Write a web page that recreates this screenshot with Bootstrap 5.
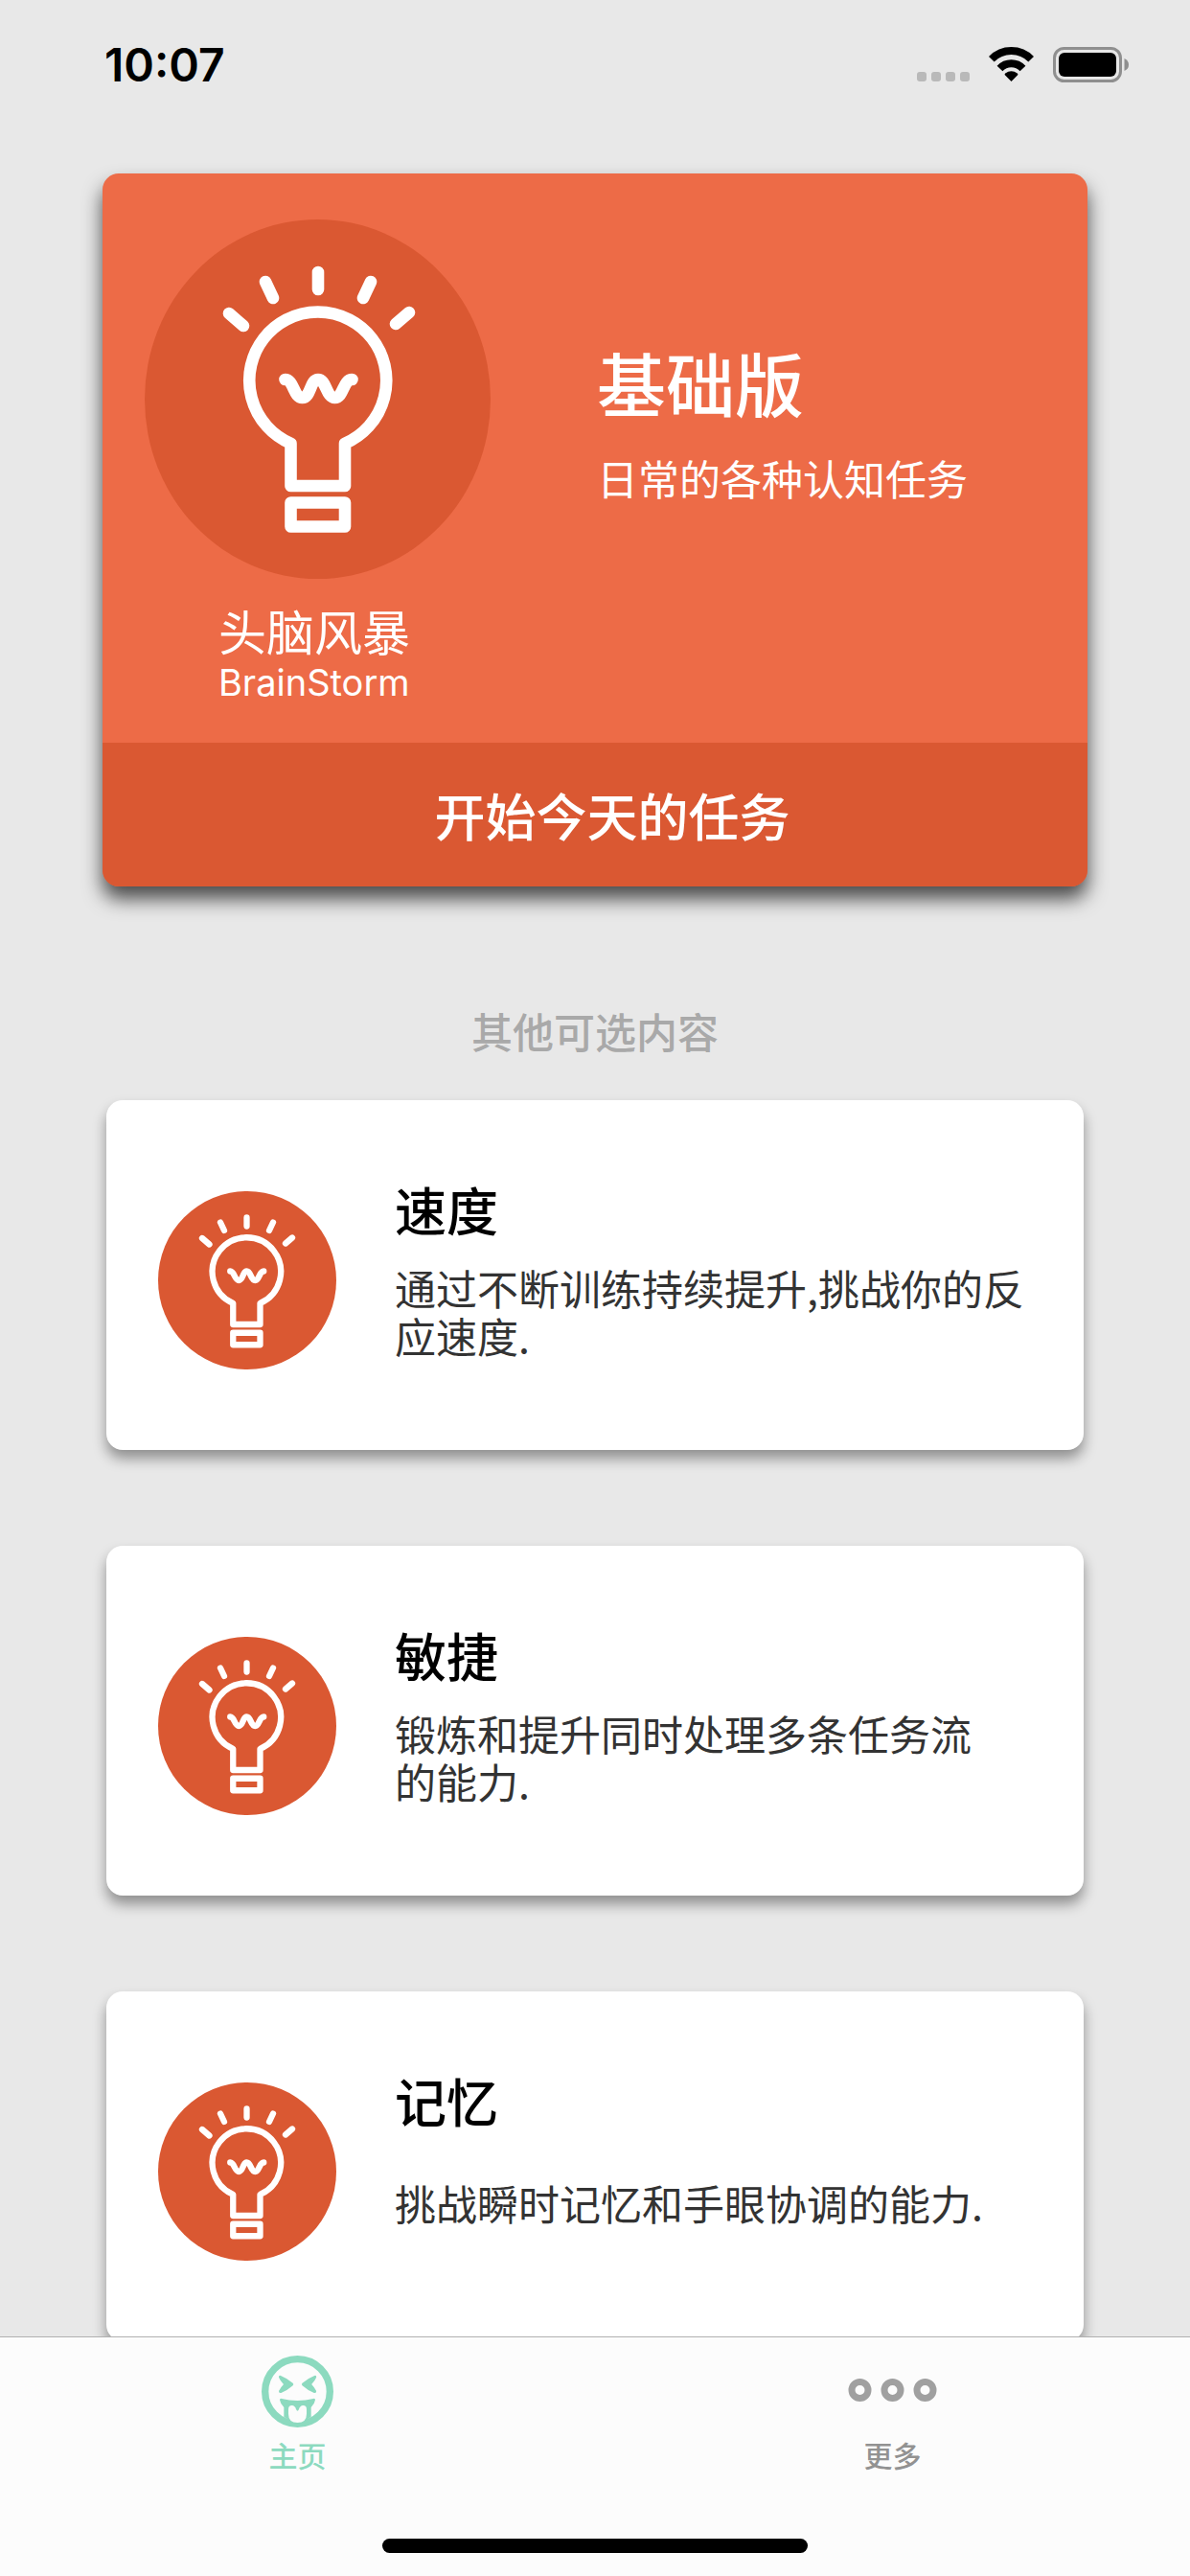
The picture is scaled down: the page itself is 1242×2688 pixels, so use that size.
<!DOCTYPE html>
<html lang="zh-CN">
<head>
<meta charset="utf-8">
<meta name="viewport" content="width=device-width, initial-scale=1">
<title>头脑风暴 BrainStorm</title>
<link href="https://cdn.jsdelivr.net/npm/bootstrap@5.3.0/dist/css/bootstrap.min.css" rel="stylesheet">
<style>
  :root { --page: #e8e8e8; --orange: #ed6b47; --orange-dark: #da5832; --mint: #8cdabf; --bar: #fcfcfc; }
  body { background: var(--page); color: #000; font-family: Inter, "Noto Sans CJK SC", sans-serif; }
  .status-bar { height: 181px; padding: 40px 64px 0 109px; }
  .clock { font-size: 48px; line-height: 56px; font-weight: 600; }
  .status-icons { padding-top: 9px; gap: 20px; }
  .screen { padding: 0 107px 245px; }
  .cjk { font-family: "Noto Sans CJK SC", sans-serif; }

  .hero { border: 0; border-radius: 17px; background: var(--orange); color: #fff; box-shadow: 0 13px 20px rgba(0, 0, 0, .68); }
  .hero-left { padding: 48px 0 38px 44px; }
  .hero-caption { padding: 23px 0 0 77px; }
  .hero-name { font-size: 50px; line-height: 60px; }
  .hero-latin { font-size: 38px; line-height: 50px; }
  .hero-right { padding: 174px 0 0 2px; }
  .hero-title { font-size: 72px; line-height: 86px; font-weight: 500; }
  .hero-text { font-size: 43px; line-height: 50px; margin-top: 32px; }
  .start-btn { border-radius: 0 0 17px 17px; background: var(--orange-dark); color: #fff; border: 0; height: 150px; padding: 0 0 0 36px; font-size: 53px; line-height: 64px; font-weight: 500; }
  .start-btn:hover, .start-btn:active { background: #c94f2c; color: #fff; }

  .section-label { margin: 125px 0 48px; font-size: 43px; line-height: 50px; font-weight: 500; color: #a9a9a9; }
  .task-list { gap: 100px; padding: 0 4px; }
  .task { border: 0; border-radius: 17px; min-height: 365px; color: #000; background: #fff; box-shadow: 0 9px 14px rgba(0, 0, 0, .38); }
  .task-icon { margin: 95px 61px 0 54px; }
  .task-body { padding: 82px 50px 0 0; }
  .task-title { font-size: 54px; line-height: 64px; font-weight: 500; }
  .task-text { font-size: 43px; line-height: 50px; height: 100px; margin-top: 24px; color: #333; }

  .tab-bar { background: var(--bar); border-top: 1px solid #b0b0b0; height: 250px; }
  .tab-link { padding-top: 19px; color: #929292; text-decoration: none; font-size: 30px; line-height: 36px; font-weight: 500; gap: 10px; }
  .tab-link.active { color: var(--mint); }
  .home-pill { width: 444px; height: 15px; border-radius: 8px; background: #000; margin-bottom: 24px; }
</style>
</head>
<body>
<svg class="d-none" aria-hidden="true">
  <defs>
    <g id="bulb" fill="none" stroke="#fff" stroke-width="12.6" stroke-linecap="round" stroke-linejoin="round">
      <path d="M181 55V73M126 65l8 17M236 65l-8 17M88 98l15 13M276 97l-14 12"/>
      <path d="M152.500 233.700A71.500 71.500 0 1 1 209 233.700V278H152.500Z"/>
      <path d="M152.500 295.500H209V320.500H152.500Z"/>
      <path d="M146.500 167C155.500 167 155.500 186 164.500 186S172.500 167 181 167S189.500 186 198.500 186S207 167 216.500 167"/>
    </g>
  </defs>
</svg>

<header class="status-bar d-flex justify-content-between align-items-start">
  <div class="clock">10:07</div>
  <div class="status-icons d-flex">
    <svg width="55" height="37" viewBox="0 0 55 37" fill="#b9b9b9" aria-hidden="true">
      <rect x="0" y="26" width="10" height="10" rx="3"/><rect x="15" y="26" width="10" height="10" rx="3"/><rect x="30" y="26" width="10" height="10" rx="3"/><rect x="45" y="26" width="10" height="10" rx="3"/>
    </svg>
    <svg width="47" height="37" viewBox="0 0 47 37" aria-hidden="true">
      <g fill="none" stroke="#000" stroke-width="8"><path d="M2.800 12.800A28.800 28.800 0 0 1 44.200 12.800"/><path d="M11.500 22.500A16.500 16.500 0 0 1 35.500 22.500"/></g>
      <path d="M23.500 36L16.800 29.200Q16.200 28.300 17.200 27.600Q23.500 22.800 29.800 27.600Q30.800 28.300 30.200 29.200Z"/>
    </svg>
    <svg width="79" height="37" viewBox="0 0 79 37" aria-hidden="true">
      <rect x="1.500" y="1.500" width="69" height="34" rx="10" fill="none" stroke="#8f8f8f" stroke-width="3"/>
      <rect x="6" y="6" width="60" height="25" rx="6"/>
      <path d="M74.500 12Q79 14 79 18.500T74.500 25Z" fill="#8f8f8f"/>
    </svg>
  </div>
</header>

<main class="screen container-fluid">
  <section class="hero card">
    <div class="row g-0">
      <div class="hero-left col-6">
        <svg class="d-block" width="361" height="375" viewBox="0 0 361 375" role="img" aria-label="灯泡">
          <ellipse cx="180.500" cy="187.500" rx="180.500" ry="187.500" fill="#da5832"/>
          <use href="#bulb"/>
        </svg>
        <div class="hero-caption">
          <div class="hero-name cjk">头脑风暴</div>
          <div class="hero-latin">BrainStorm</div>
        </div>
      </div>
      <div class="hero-right col-6 cjk">
        <h1 class="hero-title mb-0">基础版</h1>
        <p class="hero-text mb-0">日常的各种认知任务</p>
      </div>
    </div>
    <button type="button" class="start-btn btn w-100 cjk">开始今天的任务</button>
  </section>

  <h2 class="section-label text-center cjk">其他可选内容</h2>

  <section class="task-list d-flex flex-column cjk">
    <article class="task card flex-row align-items-start">
      <svg class="task-icon flex-shrink-0" width="186" height="186" viewBox="-4 0 372 372" aria-hidden="true"><circle cx="182" cy="186" r="186" fill="#da5832"/><use href="#bulb"/></svg>
      <div class="task-body">
        <h3 class="task-title mb-0">速度</h3>
        <div class="task-text d-flex align-items-center"><p class="mb-0">通过不断训练持续提升,挑战你的反应速度.</p></div>
      </div>
    </article>
    <article class="task card flex-row align-items-start">
      <svg class="task-icon flex-shrink-0" width="186" height="186" viewBox="-4 0 372 372" aria-hidden="true"><circle cx="182" cy="186" r="186" fill="#da5832"/><use href="#bulb"/></svg>
      <div class="task-body">
        <h3 class="task-title mb-0">敏捷</h3>
        <div class="task-text d-flex align-items-center"><p class="mb-0">锻炼和提升同时处理多条任务流<span class="text-nowrap">的能力.</span></p></div>
      </div>
    </article>
    <article class="task card flex-row align-items-start">
      <svg class="task-icon flex-shrink-0" width="186" height="186" viewBox="-4 0 372 372" aria-hidden="true"><circle cx="182" cy="186" r="186" fill="#da5832"/><use href="#bulb"/></svg>
      <div class="task-body">
        <h3 class="task-title mb-0">记忆</h3>
        <div class="task-text d-flex align-items-center"><p class="mb-0">挑战瞬时记忆和手眼协调的能力.</p></div>
      </div>
    </article>
  </section>
</main>

<nav class="tab-bar fixed-bottom d-flex flex-column justify-content-between align-items-center cjk">
  <div class="d-flex w-100">
    <a href="#" class="tab-link active flex-fill w-50 d-flex flex-column align-items-center" aria-current="page">
      <svg width="75" height="75" viewBox="0 0 225 225" fill="#8cdabf" aria-hidden="true">
        <circle cx="112.500" cy="112.500" r="101.500" fill="none" stroke="#8cdabf" stroke-width="22"/>
        <path id="eye" d="M54 68Q53 61 60 63Q82 72 98 86Q102 90 98 94Q80 110 61 117Q53 118 54 111Q60 99 69 90Q58 78 54 68Z"/>
        <use href="#eye" transform="translate(225.500 0) scale(-1 1)"/>
        <path d="M57 139Q57 133 63 135Q112 147 162 135Q168 133 168 139Q166 152 155 162V192Q112 220 70 192V162Q59 152 57 139Z"/>
        <path fill="#fcfcfc" d="M84 168Q84 156 95 156Q105 157 108 168Q112.500 178 117 168Q120 157 130 156Q141 156 141 168V182Q141 210 112.500 210Q84 210 84 182Z"/>
      </svg>
      <span>主页</span>
    </a>
    <a href="#" class="tab-link flex-fill w-50 d-flex flex-column align-items-center">
      <svg width="94" height="75" viewBox="0 0 94 75" fill="none" stroke="#a0a0a0" stroke-width="7" aria-hidden="true">
        <circle cx="12.500" cy="36" r="8.500"/><circle cx="46.500" cy="36" r="8.500"/><circle cx="80.500" cy="36" r="8.500"/>
      </svg>
      <span>更多</span>
    </a>
  </div>
  <div class="home-pill"></div>
</nav>
<script src="https://cdn.jsdelivr.net/npm/bootstrap@5.3.0/dist/js/bootstrap.bundle.min.js"></script>
</body>
</html>
